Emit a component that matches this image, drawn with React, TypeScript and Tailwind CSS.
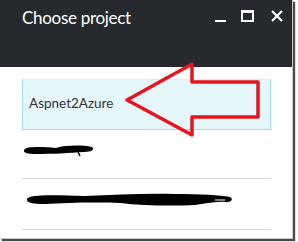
const font = { fontFamily: 'Lato, "Open Sans", sans-serif' };

export default function App() {
  return (
    <div className="relative w-[298px] h-[242px] bg-white" style={font}>
      <div className="w-[293px] h-[239px] border-r border-b border-[#c9c9c9] shadow-[2px_2px_1px_#4a4a4a] bg-white flex flex-col">
        {/* header */}
        <div className="h-[67px] bg-[#262a2f] flex items-start pl-[22px] pr-[9px] pt-[6px]">
          <span className="text-white text-[17px] leading-[24px] tracking-[-0.3px] flex-1">Choose project</span>
          <div className="flex items-start pt-[4px]">
            <div className="w-[11px] h-[12px] flex items-end">
              <div className="w-[11px] h-[2px] bg-white" />
            </div>
            <div className="ml-[15px] w-[13px] h-[12px] border-2 border-t-[3px] border-white" />
            <svg className="ml-[17px]" width={12} height={12} viewBox="0 0 12 12">
              <path d="M1 1 L11 11 M11 1 L1 11" stroke="#fff" strokeWidth={2.2} />
            </svg>
          </div>
        </div>

        {/* list */}
        <div className="flex flex-col pl-[22px] pt-[12px] pr-[21px]">
          <div className="h-[51px] bg-[#e6f6fd] border border-[#9ed9f2] border-t-[#d6effa] pl-[6px] pb-[3px] flex items-center text-[13.5px] text-[#333]">
            Aspnet2Azure
          </div>
          <div className="h-[49px] border-b border-[#d8d8d8] pt-[13px]">
            <svg width={74} height={14} viewBox="0 0 74 14" className="block">
              <path
                d="M2 7 C 4 3, 20 4, 34 5 C 44 2, 60 2, 70 4 C 73 6, 70 9, 62 9 C 48 10, 30 11, 14 11 C 6 11, 1 10, 2 7 Z"
                fill="#000"
              />
              <path d="M56 9 L58 13" stroke="#000" strokeWidth={1.5} />
            </svg>
          </div>
          <div className="h-[51px] border-b border-[#d8d8d8] pt-[10px] pl-[3px]">
            <svg width={212} height={20} viewBox="0 0 212 20" className="block">
              <path
                d="M2 10 C 4 5, 30 6, 60 7 C 90 6, 120 4, 150 5 C 175 5, 195 6, 205 8 C 209 10, 206 14, 200 13 C 190 12, 180 15, 170 16 C 150 17, 120 17, 95 14 C 70 13, 40 14, 20 15 C 8 15, 1 14, 2 10 Z"
                fill="#000"
              />
              <path d="M190 11 L200 11" stroke="#fff" strokeWidth={1} />
            </svg>
          </div>
        </div>
      </div>

      {/* red annotation arrow */}
      <svg className="absolute left-0 top-0" width={298} height={242} viewBox="0 0 298 242" fill="none">
        <path
          d="M127 100 L192 64 L192 82 L258 82 L258 117 L192 117 L192 135 Z"
          stroke="#e8141c"
          strokeWidth={3.5}
          strokeLinejoin="round"
        />
      </svg>
    </div>
  );
}
